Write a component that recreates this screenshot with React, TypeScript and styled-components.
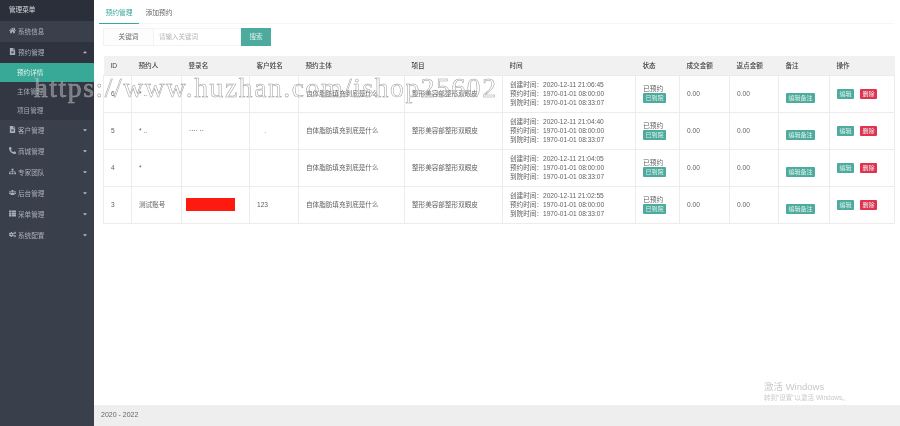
import React from "react";
import styled, { createGlobalStyle } from "styled-components";
import { FaHome, FaFileAlt, FaCaretDown, FaCaretUp, FaPhoneAlt, FaSitemap, FaUsers, FaThList, FaCogs } from "react-icons/fa";

const Global = createGlobalStyle`
  html, body { margin: 0; padding: 0; height: 100%; background: #fff; }
  * { box-sizing: border-box; }
  #root { height: 426px; }
  body { font-family: "Liberation Sans", "Noto Sans CJK SC", sans-serif; color: #676a6c; }
`;
const Page = styled.div`
  position: relative; display: flex; width: 900px; height: 426px; overflow: hidden; will-change: transform;
`;
const Sidebar = styled.aside`
  width: 94px; flex: none; background: #3a3f4c; display: flex; flex-direction: column;
`;
const Brand = styled.div`
  height: 21px; background: #2b2f3a; color: #d8dade; font-size: 6.6px; line-height: 20px; padding-left: 9px;
`;
const MenuItem = styled.div<{ $open?: boolean }>`
  height: 21px; display: flex; align-items: center; padding: 0 9px 2px; gap: 2px; font-size: 6.6px; color: #aab0ba;
  background: ${p => (p.$open ? "#2f3340" : "transparent")};
  svg:first-child { font-size: 7px; width: 7px; flex: none; }
  span { flex: 1; }
  svg:last-child { font-size: 6px; color: #b4b9c2; margin-right: -3px; }
`;
const SubList = styled.div`
  background: #333744; display: flex; flex-direction: column;
`;
const SubItem = styled.div<{ $active?: boolean }>`
  height: 19px; padding-left: 17px; font-size: 6.6px; line-height: 19px;
  color: ${p => (p.$active ? "#e4f4f1" : "#a3a9b3")};
  background: ${p => (p.$active ? "#38a897" : "transparent")};
`;
const Main = styled.main`
  flex: 1; display: flex; flex-direction: column; min-width: 0;
`;
const Content = styled.div`
  flex: 1; padding: 0 6px 0 9px;
`;
const Tabs = styled.div`
  display: flex; height: 24px; border-bottom: 1px solid #f6f6f6; margin-left: -4px;
`;
const Tab = styled.div<{ $active?: boolean }>`
  width: 40px; height: 24px; text-align: center; font-size: 6.8px; line-height: 26px;
  color: ${p => (p.$active ? "#38a897" : "#666")};
  border-bottom: ${p => (p.$active ? "1px solid #38a897" : "none")};
`;
const Search = styled.div`
  display: flex; height: 18px; margin-top: 4px;
`;
const SearchLabel = styled.div`
  width: 51px; border: 1px solid #f2f2f2; background: #fdfdfd; font-size: 6.6px; line-height: 16px; text-align: center; color: #666;
`;
const SearchInput = styled.div`
  width: 87px; border: 1px solid #f4f4f4; border-left: none; font-size: 6.5px; line-height: 16px; padding-left: 5px; color: #b5b5b5;
`;
const SearchButton = styled.div`
  width: 30px; background: #4cab9c; color: #dff2ee; font-size: 6.6px; line-height: 18px; text-align: center;
`;
const Table = styled.table`
  margin-top: 10px; width: 791px; border-collapse: collapse; table-layout: fixed; font-size: 6.6px; color: #5f5f5f;
  th { height: 19px; background: #f1f1f1; color: #444; font-weight: 500; text-align: left; padding: 0 7px; border: none; }
  td { height: 37px; padding: 0 7px; border: 1px solid #ececec; vertical-align: middle; line-height: 9.3px; white-space: nowrap; overflow: hidden; }
`;
const Stacked = styled.div`
  display: flex; flex-direction: column; align-items: flex-start; gap: 0; line-height: 9px; font-size: 6.8px;
`;
const Badge = styled.span<{ $danger?: boolean }>`
  display: inline-block; height: 10px; line-height: 10px; padding: 0 2.5px; font-size: 6px; border-radius: 1px; color: #e3f3f0;
  background: ${p => (p.$danger ? "#e3314f" : "#4cab9c")};
`;
const NoteBadge = styled(Badge)`
  position: relative; top: 4px;
`;
const Actions = styled.div`
  display: flex; gap: 6px; align-items: center;
`;
const Redacted = styled.div`
  width: 49px; height: 13px; background: #ff1a10; margin-left: -3px;
`;
const Footer = styled.footer`
  height: 21px; background: #eeeeee; font-size: 7px; line-height: 20px; padding-left: 7px; color: #666;
`;
const Watermark = styled.div`
  position: absolute; left: 34px; top: 70px; font-family: "Liberation Serif", serif; font-size: 27.5px; line-height: 36px;
  letter-spacing: 1.6px; color: rgba(255,255,255,0.35); -webkit-text-stroke: 0.5px #9a9a9a; white-space: nowrap; pointer-events: none;
`;
const Activation = styled.div`
  position: absolute; left: 764px; top: 382px; color: #c9c9c9; font-size: 9.5px; line-height: 10px; pointer-events: none;
  small { display: block; font-size: 6.5px; line-height: 8px; margin-top: 2px; }
`;

const rows = [
  { id: "6", person: "* ..", login: "", name: "", created: "21:06:45" },
  { id: "5", person: "* ..", login: "···· ··", name: "\u00a0\u00a0\u00a0\u00a0.", created: "21:04:40" },
  { id: "4", person: "*", login: "", name: "", created: "21:04:05" },
  { id: "3", person: "测试账号", login: "RED", name: "123", created: "21:02:55" },
];
const widths = [28, 50, 68, 49, 106, 98, 133, 44, 50, 49, 51, 65];
const headers = ["ID", "预约人", "登录名", "客户姓名", "预约主体", "项目", "时间", "状态", "成交金额", "返点金额", "备注", "操作"];

export default function App() {
  return (
    <Page>
      <Global />
      <Sidebar>
        <Brand>管理菜单</Brand>
        <MenuItem><FaHome /><span>系统信息</span></MenuItem>
        <MenuItem $open><FaFileAlt /><span>预约管理</span><FaCaretUp /></MenuItem>
        <SubList>
          <SubItem $active>预约详情</SubItem>
          <SubItem>主体管理</SubItem>
          <SubItem>项目管理</SubItem>
        </SubList>
        <MenuItem><FaFileAlt /><span>客户管理</span><FaCaretDown /></MenuItem>
        <MenuItem><FaPhoneAlt /><span>商城管理</span><FaCaretDown /></MenuItem>
        <MenuItem><FaSitemap /><span>专家团队</span><FaCaretDown /></MenuItem>
        <MenuItem><FaUsers /><span>后台管理</span><FaCaretDown /></MenuItem>
        <MenuItem><FaThList /><span>采单管理</span><FaCaretDown /></MenuItem>
        <MenuItem><FaCogs /><span>系统配置</span><FaCaretDown /></MenuItem>
      </Sidebar>
      <Main>
        <Content>
          <Tabs>
            <Tab $active>预约管理</Tab>
            <Tab>添加预约</Tab>
          </Tabs>
          <Search>
            <SearchLabel>关键词</SearchLabel>
            <SearchInput>请输入关键词</SearchInput>
            <SearchButton>搜索</SearchButton>
          </Search>
          <Table>
            <colgroup>{widths.map((w, i) => <col key={i} style={{ width: w }} />)}</colgroup>
            <thead>
              <tr>{headers.map(h => <th key={h}>{h}</th>)}</tr>
            </thead>
            <tbody>
              {rows.map(r => (
                <tr key={r.id}>
                  <td>{r.id}</td>
                  <td>{r.person}</td>
                  <td>{r.login === "RED" ? <Redacted /> : r.login}</td>
                  <td>{r.name}</td>
                  <td>自体脂肪填充到底是什么</td>
                  <td>整形美容部整形双眼皮</td>
                  <td>
                    创建时间：2020-12-11 {r.created}<br />
                    预约时间：1970-01-01 08:00:00<br />
                    到院时间：1970-01-01 08:33:07
                  </td>
                  <td><Stacked>已预约<Badge>已到院</Badge></Stacked></td>
                  <td>0.00</td>
                  <td>0.00</td>
                  <td><NoteBadge>编辑备注</NoteBadge></td>
                  <td><Actions><Badge>编辑</Badge><Badge $danger>删除</Badge></Actions></td>
                </tr>
              ))}
            </tbody>
          </Table>
        </Content>
        <Footer>2020 - 2022</Footer>
      </Main>
      <Watermark>https://www.huzhan.com/ishop25602</Watermark>
      <Activation>激活 Windows<small>转到"设置"以激活 Windows。</small></Activation>
    </Page>
  );
}
